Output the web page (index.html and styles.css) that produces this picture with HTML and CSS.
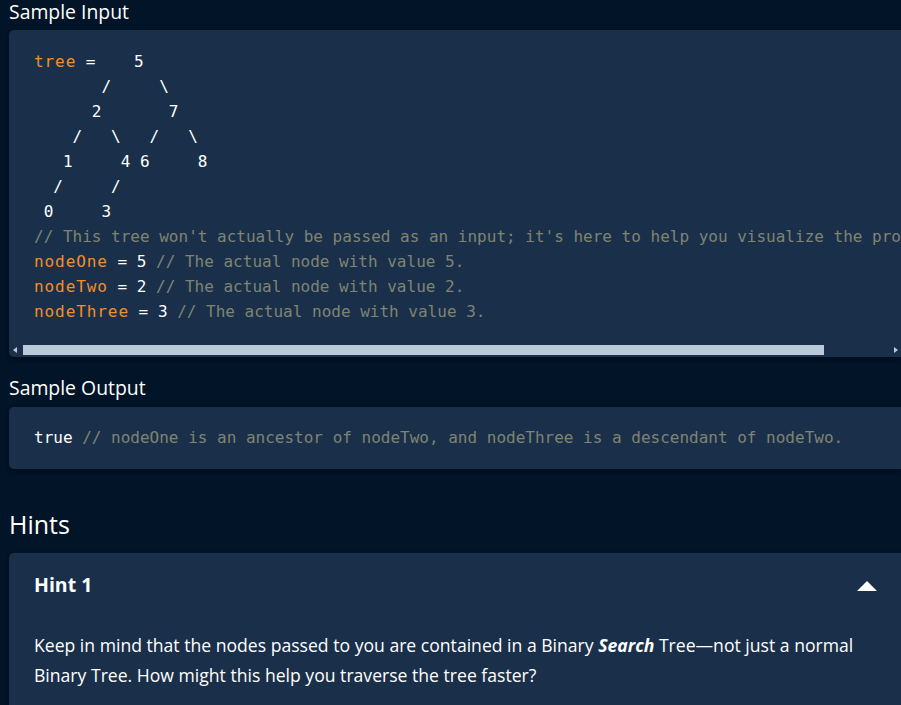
FILE: index.html
```html
<!DOCTYPE html>
<html lang="en">
<head>
<meta charset="utf-8">
<title>Sample</title>
<link rel="stylesheet" href="styles.css">
</head>
<body>
<main class="page">
  <h3 class="label">Sample Input</h3>
  <section class="card code-card">
<pre class="code"><span class="var">tree</span> =    5
       /     \
      2       7
    /   \   /   \
   1     4 6     8
  /     /
 0     3
<span class="cm">// This tree won't actually be passed as an input; it's here to help you visualize the problem.</span>
<span class="var">nodeOne</span> = 5 <span class="cm">// The actual node with value 5.</span>
<span class="var">nodeTwo</span> = 2 <span class="cm">// The actual node with value 2.</span>
<span class="var">nodeThree</span> = 3 <span class="cm">// The actual node with value 3.</span></pre>
    <div class="hscroll">
      <div class="sb-btn"><span class="arr-left"></span></div>
      <div class="sb-track"><div class="sb-thumb"></div></div>
      <div class="sb-btn sb-btn-right"><span class="arr-right"></span></div>
    </div>
  </section>

  <h3 class="label label-out">Sample Output</h3>
  <section class="card out-card">
<pre class="code">true <span class="cm">// nodeOne is an ancestor of nodeTwo, and nodeThree is a descendant of nodeTwo.</span></pre>
  </section>

  <h2 class="hints-title">Hints</h2>
  <section class="card hint-card">
    <div class="hint-head">
      <span class="hint-name">Hint 1</span>
      <svg class="caret" width="20" height="11" viewBox="0 0 20 11" aria-hidden="true"><polygon points="0,11 10,1 20,11" fill="#ffffff"/></svg>
    </div>
    <p class="hint-text">Keep in mind that the nodes passed to you are contained in a Binary <b><i>Search</i></b> Tree—not just a normal Binary Tree. How might this help you traverse the tree faster?</p>
  </section>
</main>
</body>
</html>
```

FILE: styles.css
```css
* { box-sizing: border-box; }

html, body {
  margin: 0;
  padding: 0;
  background: #011428;
  overflow: hidden;
}

body {
  font-family: "Open Sans", "Noto Sans", sans-serif;
  color: #ffffff;
}

.page {
  padding-left: 9px;
  display: flex;
  flex-direction: column;
}

.label {
  margin: 0 0 6px 0;
  font-size: 19.4px;
  font-weight: 500;
  line-height: 24px;
  color: #ffffff;
}

.label-out {
  margin-top: 19px;
  margin-bottom: 7px;
}

.card {
  background: #1a304a;
  border-radius: 5px 0 0 5px;
  box-shadow: 0 2px 4px rgba(0, 0, 0, 0.45);
  overflow: hidden;
}

.code {
  margin: 0;
  font-family: "DejaVu Sans Mono", "Liberation Mono", monospace;
  font-size: 16px;
  line-height: 25px;
  color: #ffffff;
  white-space: pre;
  overflow: hidden;
}

.code-card .code {
  padding: 19px 25px 20px 25px;
}

.out-card .code {
  padding: 18px 25px 19px 25px;
}

.var {
  color: #f58c28;
  letter-spacing: 0.92px;
}

.cm {
  color: #7f8472;
}

.hscroll {
  display: flex;
  height: 13px;
  align-items: flex-start;
}

.sb-btn {
  width: 14px;
  height: 12px;
  display: flex;
  align-items: center;
  justify-content: center;
}

.sb-btn-right {
  justify-content: flex-start;
  padding-left: 7px;
}

.arr-left {
  width: 0;
  height: 0;
  border-top: 3px solid transparent;
  border-bottom: 3px solid transparent;
  border-right: 4px solid #b9cadb;
  margin-left: -2px;
}

.arr-right {
  width: 0;
  height: 0;
  border-top: 3px solid transparent;
  border-bottom: 3px solid transparent;
  border-left: 4px solid #b9cadb;
}

.sb-track {
  flex: 1;
  padding-top: 1px;
}

.sb-thumb {
  width: 801px;
  height: 10px;
  background: #b9cadb;
}

.hints-title {
  margin: 38px 0 12px 0;
  font-size: 25px;
  font-weight: 400;
  line-height: 34px;
  color: #ffffff;
}

.hint-card {
  padding: 20px 24px 30px 25px;
}

.hint-head {
  display: flex;
  justify-content: space-between;
  align-items: center;
  height: 24px;
}

.hint-name {
  font-size: 19.5px;
  font-weight: 700;
  line-height: 24px;
}

.caret {
  display: block;
  margin-top: 1px;
}

.hint-text {
  margin: 33px 0 0 0;
  font-size: 17.6px;
  line-height: 30px;
  color: #ffffff;
}

.hint-text b {
  font-weight: 700;
}
```
